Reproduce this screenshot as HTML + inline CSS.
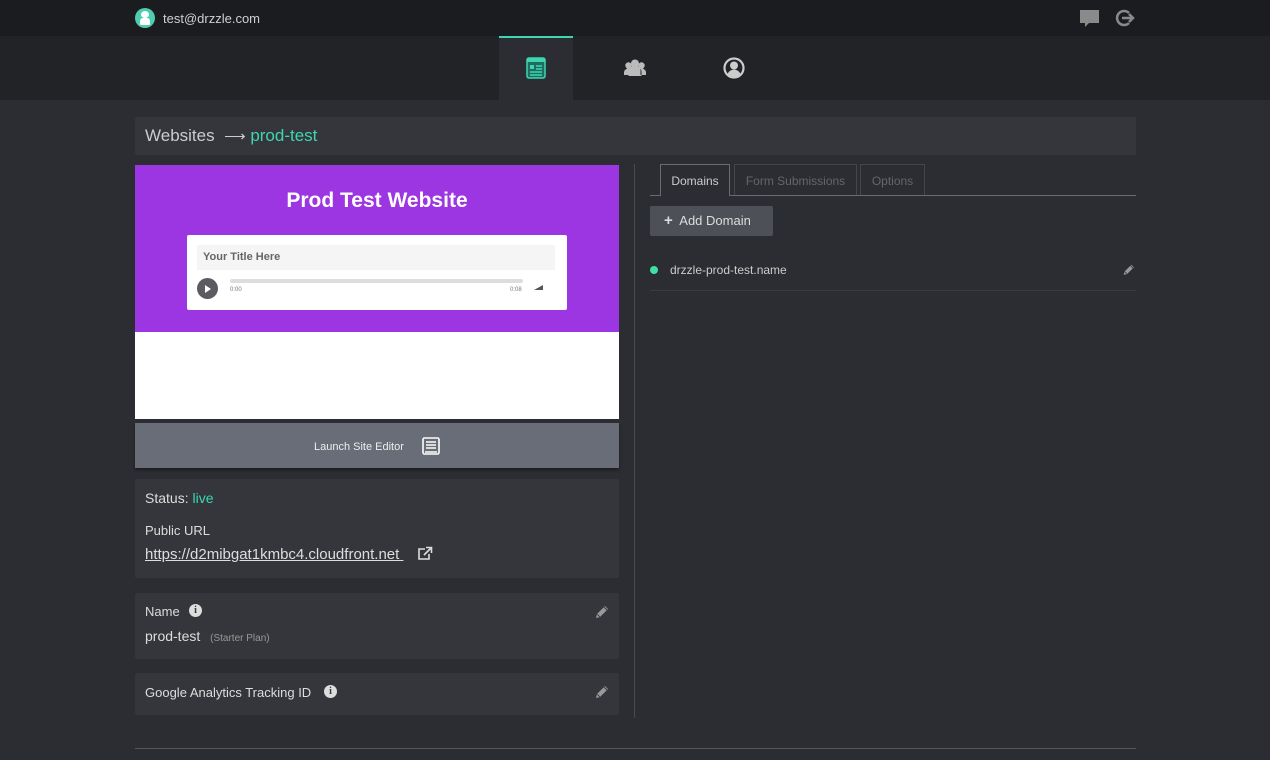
<!DOCTYPE html>
<html><head><meta charset="utf-8"><style>
*{box-sizing:border-box;margin:0;padding:0}
body{width:1270px;height:760px;overflow:hidden;background:#2c2d32;font-family:"Liberation Sans",sans-serif;color:#d8d8d8;position:relative}
.abs{position:absolute}
.top{left:0;top:0;width:1270px;height:36px;background:#1b1c20}
.nav{left:0;top:36px;width:1270px;height:64px;background:#222327}
.panel{background:#35363b;border-radius:2px}
.teal{color:#3dd6b0}
</style></head><body>
<svg width="0" height="0" style="position:absolute"><defs><g id="pen"><path d="M2 14l1-4 8-8 3 3-8 8z" fill="#999"/><path d="M10 3l3 3" stroke="#35363b" stroke-width="1"/><path d="M3.2 10.2l2.6 2.6" stroke="#35363b" stroke-width="0.8"/></g></defs></svg>
<div class="abs top">
 <div class="abs" style="left:135px;top:8px;width:20px;height:20px;border-radius:50%;background:#4ecdb0"></div>
 <div class="abs" style="left:141px;top:11px;width:8px;height:7px;border-radius:50%;background:#fff"></div>
 <div class="abs" style="left:140px;top:18px;width:10px;height:7px;border-radius:3px 3px 1px 1px;background:#fff"></div>
 <div class="abs" style="left:163px;top:11px;font-size:13px;color:#cfcfcf">test@drzzle.com</div>
 <svg class="abs" style="left:1080px;top:10px" width="20" height="18"><path d="M0 0h19v13H9l-4 4v-4H0z" fill="#8a8a8a"/></svg>
 <svg class="abs" style="left:1115px;top:9px" width="22" height="18"><path d="M14 4A7 7 0 1 0 14 14" stroke="#8a8a8a" stroke-width="2.5" fill="none"/><path d="M7 9h10M14 5l4 4-4 4" stroke="#8a8a8a" stroke-width="2.5" fill="none"/></svg>
</div>
<div class="abs nav">
 <div class="abs" style="left:499px;top:0;width:74px;height:64px;background:#2c2d32;border-top:2px solid #3dd6b0"></div>
 <svg class="abs" style="left:526px;top:21px" width="20" height="22"><rect x="1" y="1" width="18" height="20" rx="2" fill="#1e6d60" stroke="#3dd6b0" stroke-width="1.5"/><rect x="1" y="1" width="18" height="4" fill="#3dd6b0"/><rect x="4" y="8" width="4" height="4" fill="#3dd6b0"/><path d="M10 9h6M10 12h6M4 15h12M4 18h12" stroke="#3dd6b0" stroke-width="1.5"/></svg>
 <svg class="abs" style="left:624px;top:23px" width="22" height="17"><circle cx="11" cy="4.5" r="4" fill="#bbb"/><circle cx="4.5" cy="6.5" r="3.2" fill="#bbb"/><circle cx="17.5" cy="6.5" r="3.2" fill="#bbb"/><path d="M4.5 17v-4a6.5 6.5 0 0 1 13 0v4zM0 16v-3a4.5 4.5 0 0 1 5.5-3.5v6.5zM22 16v-3a4.5 4.5 0 0 0-5.5-3.5v6.5z" fill="#bbb"/></svg>
 <svg class="abs" style="left:723px;top:21px" width="22" height="22"><circle cx="11" cy="11" r="9.5" fill="#222327" stroke="#ccc" stroke-width="2.2"/><circle cx="11" cy="8.5" r="4" fill="#ccc"/><path d="M4.5 17a7 7 0 0 1 13 0a9 9 0 0 1-13 0z" fill="#ccc"/></svg>
</div>
<div class="abs panel" style="left:135px;top:117px;width:1001px;height:38px">
 <div class="abs" style="left:10px;top:9px;font-size:17px;color:#ccc">Websites &nbsp;<span style="font-size:15px">⟶</span> <span class="teal">prod-test</span></div>
</div>
<div class="abs" style="left:135px;top:165px;width:484px;height:254px;background:#fff">
 <div class="abs" style="left:0;top:0;width:484px;height:167px;background:#9b36e2"></div>
 <div class="abs" style="left:0;top:24px;width:484px;text-align:center;color:#fff;font-weight:bold;font-size:21px">Prod Test Website</div>
 <div class="abs" style="left:52px;top:70px;width:380px;height:75px;background:#fff;border-radius:2px">
  <div class="abs" style="left:10px;top:10px;width:358px;height:25px;background:#f5f5f5;font-weight:bold;font-size:11px;color:#666;padding:6px 6px">Your Title Here</div>
  <div class="abs" style="left:10px;top:43px;width:21px;height:21px;border-radius:50%;background:#5b5c60"></div>
  <div class="abs" style="left:18px;top:50px;width:0;height:0;border-left:6px solid #fff;border-top:4px solid transparent;border-bottom:4px solid transparent"></div>
  <div class="abs" style="left:43px;top:44px;width:293px;height:4px;border-radius:2px;background:#ddd"></div>
  <div class="abs" style="left:43px;top:52px;font-size:6px;color:#777">0:00</div>
  <div class="abs" style="left:323px;top:52px;font-size:6px;color:#777">0:08</div>
  <div class="abs" style="left:347px;top:50px;width:0;height:0;border-bottom:5px solid #555;border-left:9px solid transparent"></div>
 </div>
</div>
<div class="abs" style="left:135px;top:423px;width:484px;height:45px;background:#686d77;box-shadow:0 2px 3px rgba(0,0,0,.4)">
 <div class="abs" style="left:179px;top:18px;font-size:11px;color:#eee">Launch Site Editor</div>
 <svg class="abs" style="left:287px;top:14px" width="18" height="18"><rect x="1" y="1" width="16" height="16" rx="1.5" fill="none" stroke="#fff" stroke-width="1.6"/><path d="M4 5h10M4 8h10M4 11h10M3 15h12" stroke="#fff" stroke-width="1.5"/></svg>
</div>
<div class="abs panel" style="left:135px;top:479px;width:484px;height:99px">
 <div class="abs" style="left:10px;top:11px;font-size:14px;color:#ddd">Status: <span class="teal">live</span></div>
 <div class="abs" style="left:10px;top:44px;font-size:13px;color:#ddd">Public URL</div>
 <div class="abs" style="left:10px;top:67px;font-size:15px;color:#ddd;text-decoration:underline;white-space:nowrap">https://d2mibgat1kmbc4.cloudfront.net&nbsp;</div>
 <svg class="abs" style="left:282px;top:67px" width="16" height="15"><path d="M8 3H2v10h10V8" stroke="#ddd" stroke-width="1.6" fill="none"/><path d="M7 9l7-7M9 1.5h5.5V7" stroke="#ddd" stroke-width="1.6" fill="none"/></svg>
</div>
<div class="abs panel" style="left:135px;top:593px;width:484px;height:66px">
 <div class="abs" style="left:10px;top:11px;font-size:13px;color:#ddd">Name</div>
 <div class="abs" style="left:54px;top:11px;width:13px;height:13px;border-radius:50%;background:#ddd;color:#35363b;font-size:10px;font-weight:bold;text-align:center;line-height:13px;font-family:'Liberation Serif',serif">i</div>
 <div class="abs" style="left:10px;top:35px;font-size:14px;color:#ddd">prod-test <span style="font-size:10px;color:#999;margin-left:6px">(Starter Plan)</span></div>
 <svg class="abs" style="left:459px;top:11px" width="16" height="16"><use href="#pen"/></svg>
</div>
<div class="abs panel" style="left:135px;top:673px;width:484px;height:42px">
 <div class="abs" style="left:10px;top:12px;font-size:13px;color:#ddd">Google Analytics Tracking ID</div>
 <div class="abs" style="left:189px;top:12px;width:13px;height:13px;border-radius:50%;background:#ddd;color:#35363b;font-size:10px;font-weight:bold;text-align:center;line-height:13px;font-family:'Liberation Serif',serif">i</div>
 <svg class="abs" style="left:459px;top:11px" width="16" height="16"><use href="#pen"/></svg>
</div>
<div class="abs" style="left:634px;top:164px;width:1px;height:554px;background:#4a4b50"></div>
<div class="abs" style="left:650px;top:195px;width:486px;height:1px;background:#6a6b70"></div>
<div class="abs" style="left:660px;top:164px;width:70px;height:32px;background:#2c2d32;border:1px solid #6a6b70;border-bottom:none;font-size:12px;color:#ccc;text-align:center;line-height:33px">Domains</div>
<div class="abs" style="left:734px;top:164px;width:123px;height:31px;border:1px solid #45464b;border-bottom:none;font-size:12px;color:#666;text-align:center;line-height:33px">Form Submissions</div>
<div class="abs" style="left:860px;top:164px;width:65px;height:31px;border:1px solid #45464b;border-bottom:none;font-size:12px;color:#666;text-align:center;line-height:33px">Options</div>
<div class="abs" style="left:650px;top:206px;width:123px;height:30px;background:#4d5057;border-radius:2px;font-size:13px;color:#ddd;line-height:30px;padding-left:14px"><b style="font-size:15px">+</b>&nbsp; Add Domain</div>
<div class="abs" style="left:650px;top:266px;width:8px;height:8px;border-radius:50%;background:#3de0a0"></div>
<div class="abs" style="left:670px;top:263px;font-size:12px;color:#ccc">drzzle-prod-test.name</div>
<svg class="abs" style="left:1122px;top:263px" width="14" height="14"><g transform="scale(0.85)"><use href="#pen"/></g></svg>
<div class="abs" style="left:650px;top:290px;width:486px;height:1px;background:#3a3b40"></div>
<div class="abs" style="left:135px;top:748px;width:1001px;height:1px;background:#55565b"></div>
</body></html>
